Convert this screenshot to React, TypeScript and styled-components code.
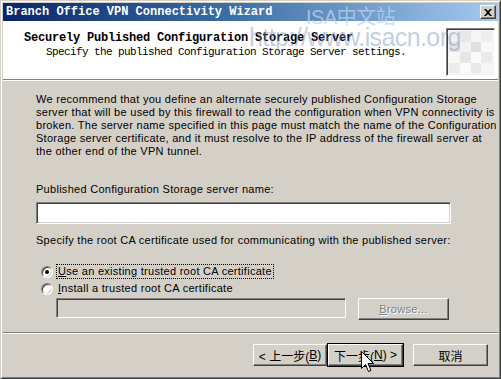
import React from "react";
import styled, { createGlobalStyle, css } from "styled-components";

const GlobalStyle = createGlobalStyle`
  html, body {
    margin: 0;
    padding: 0;
    background: #d4d0c8;
  }
  * {
    box-sizing: border-box;
  }
`;

const UI_FONT = `"Liberation Sans", Arial, sans-serif`;
const SIMSUN_LATIN = `"Liberation Mono", "Courier New", monospace`;
const CJK_FONT = `"Liberation Sans", "Noto Sans CJK SC", sans-serif`;

/* ---------- window frame ---------- */

const Window = styled.div`
  position: relative;
  width: 501px;
  height: 379px;
  background: #d4d0c8;
  border: 1px solid;
  border-color: #d4d0c8 #404040 #404040 #d4d0c8;
  box-shadow: inset 1px 1px #ffffff, inset -1px -1px #808080;
  padding: 2px;
  display: flex;
  flex-direction: column;
  overflow: hidden;
  font-family: ${UI_FONT};
  font-size: 11px;
  color: #000;
`;

const TitleBar = styled.div`
  height: 18px;
  display: flex;
  align-items: center;
  justify-content: space-between;
  padding: 0 2px 0 3px;
  background: linear-gradient(to right, #0a246a 0%, #3a6ea5 45%, #a6caf0 100%);
`;

const TitleText = styled.span`
  font-family: ${SIMSUN_LATIN};
  font-weight: bold;
  font-size: 12px;
  color: #ffffff;
  white-space: nowrap;
`;

const CloseButton = styled.div`
  width: 16px;
  height: 14px;
  background: #d4d0c8;
  border: 1px solid;
  border-color: #ffffff #404040 #404040 #ffffff;
  box-shadow: inset -1px -1px #808080;
  display: flex;
  align-items: center;
  justify-content: center;
`;

/* ---------- header ---------- */

const Header = styled.div`
  height: 59px;
  background: #ffffff;
  display: flex;
  justify-content: space-between;
  padding: 7px 3px 0 21px;
  border-bottom: 1px solid #808080;
`;

const HeaderText = styled.div`
  padding-top: 3px;
  display: flex;
  flex-direction: column;
`;

const HeaderTitle = styled.div`
  font-family: ${SIMSUN_LATIN};
  font-weight: bold;
  font-size: 12px;
  letter-spacing: -0.2px;
  line-height: 14px;
  white-space: nowrap;
`;

const HeaderSub = styled.div`
  font-family: ${SIMSUN_LATIN};
  font-size: 11px;
  letter-spacing: -0.6px;
  line-height: 13px;
  margin-top: 1px;
  padding-left: 22px;
  white-space: nowrap;
`;

const WizardImage = styled.div`
  width: 49px;
  height: 48px;
  border: 1px solid;
  border-color: #808080 #ffffff #ffffff #808080;
  box-shadow: inset 1px 1px #404040;
  background: #f4f4f4;
  display: grid;
  grid-template-columns: repeat(4, 1fr);
  grid-template-rows: repeat(4, 1fr);
  padding: 2px;
`;

const Tile = styled.div<{ $shade: string }>`
  background: ${(p) => p.$shade};
`;

/* ---------- body ---------- */

const Body = styled.div`
  flex: 1;
  border-top: 1px solid #ffffff;
  padding: 12px 0 0 33px;
  display: flex;
  flex-direction: column;
`;

const Paragraph = styled.p`
  margin: 0;
  line-height: 13px;
  letter-spacing: 0.28px;
  white-space: nowrap;
`;

const FieldLabel = styled.div<{ $gap: number }>`
  margin-top: ${(p) => p.$gap}px;
  line-height: 13px;
  letter-spacing: 0.28px;
`;

const sunken = css`
  border: 1px solid;
  border-color: #808080 #ffffff #ffffff #808080;
  box-shadow: inset 1px 1px #404040, inset -1px -1px #d4d0c8;
`;

const TextBox = styled.div<{ $disabled?: boolean }>`
  ${sunken};
  background: ${(p) => (p.$disabled ? "#d4d0c8" : "#ffffff")};
`;

const NameBox = styled(TextBox)`
  margin-top: 6px;
  width: 415px;
  height: 22px;
`;

const RadioGroup = styled.div`
  margin-top: 16px;
  display: flex;
  flex-direction: column;
`;

const RadioRow = styled.label`
  height: 17px;
  display: flex;
  align-items: center;
  padding-left: 5px;
  gap: 3px;
  letter-spacing: 0.28px;
`;

const RadioDot = styled.span<{ $checked?: boolean }>`
  position: relative;
  width: 12px;
  height: 12px;
  border-radius: 50%;
  background: #ffffff;
  border: 1px solid;
  border-color: #808080 #ffffff #ffffff #808080;
  box-shadow: inset 1px 1px #404040, inset -1px -1px #d4d0c8;
  &::after {
    content: "";
    display: ${(p) => (p.$checked ? "block" : "none")};
    position: absolute;
    left: 3px;
    top: 3px;
    width: 4px;
    height: 4px;
    border-radius: 50%;
    background: #000;
  }
`;

const RadioText = styled.span<{ $focused?: boolean }>`
  line-height: 13px;
  padding: 0 1px;
  border: 1px dotted ${(p) => (p.$focused ? "#000" : "transparent")};
`;

const Key = styled.u`
  text-decoration: underline;
  text-underline-offset: 1px;
`;

const CertRow = styled.div`
  margin-top: 1px;
  padding-left: 20px;
  display: flex;
  align-items: flex-start;
  gap: 12px;
`;

const CertBox = styled(TextBox)`
  width: 290px;
  height: 20px;
`;

const buttonBase = css`
  height: 22px;
  background: #d4d0c8;
  border: 1px solid;
  border-color: #ffffff #404040 #404040 #ffffff;
  box-shadow: inset -1px -1px #808080;
  display: flex;
  align-items: center;
  justify-content: center;
  font-size: 11px;
  padding: 0;
`;

const BrowseButton = styled.div`
  ${buttonBase};
  width: 91px;
  color: #808080;
  letter-spacing: 0.3px;
  text-shadow: 1px 1px #ffffff;
`;

/* ---------- footer ---------- */

const Footer = styled.div`
  height: 44px;
  border-top: 1px solid #808080;
  box-shadow: inset 0 1px #ffffff;
  display: flex;
  justify-content: flex-end;
  align-items: flex-start;
  padding: 11px 10px 0 0;
`;

const NavButton = styled.div<{ $default?: boolean; $width: number; $gap?: number }>`
  ${buttonBase};
  width: ${(p) => p.$width}px;
  margin-left: ${(p) => p.$gap ?? 0}px;
  font-family: ${CJK_FONT};
  font-size: 12px;
  ${(p) =>
    p.$default &&
    css`
      outline: 1px solid #000;
      outline-offset: 0;
    `}
`;

/* ---------- overlays ---------- */

const WatermarkCn = styled.div`
  position: absolute;
  left: 305px;
  top: 0px;
  font-family: "Liberation Sans", "Noto Sans CJK SC", sans-serif;
  font-size: 20px;
  letter-spacing: -0.5px;
  color: rgba(190, 210, 236, 0.75);
  pointer-events: none;
`;

const WatermarkUrl = styled.div`
  position: absolute;
  left: 248px;
  top: 22px;
  font-family: "Liberation Sans", sans-serif;
  font-size: 25px;
  letter-spacing: -0.6px;
  color: rgba(120, 145, 185, 0.45);
  pointer-events: none;
`;

const Cursor = styled.svg`
  position: absolute;
  left: 360px;
  top: 350px;
`;

const tiles = [
  "#f0f0f0", "#e8e8e8", "#f6f6f6", "#eeeeee",
  "#e4e4e4", "#f2f2f2", "#e0e0e0", "#f8f8f8",
  "#f8f8f8", "#e6e6e6", "#fafafa", "#ebebeb",
  "#ececec", "#fbfbfb", "#e9e9e9", "#f5f5f5",
];

export default function App() {
  return (
    <>
      <GlobalStyle />
      <Window>
        <TitleBar>
          <TitleText>Branch Office VPN Connectivity Wizard</TitleText>
          <CloseButton>
            <svg width="8" height="7" viewBox="0 0 8 7">
              <path d="M0 0h2l2 2 2-2h2L5 3.5 8 7H6L4 5 2 7H0l3-3.5z" fill="#000" />
            </svg>
          </CloseButton>
        </TitleBar>

        <Header>
          <HeaderText>
            <HeaderTitle>Securely Published Configuration Storage Server</HeaderTitle>
            <HeaderSub>Specify the published Configuration Storage Server settings.</HeaderSub>
          </HeaderText>
          <WizardImage>
            {tiles.map((t, i) => (
              <Tile key={i} $shade={t} />
            ))}
          </WizardImage>
        </Header>

        <Body>
          <Paragraph>
            We recommend that you define an alternate securely published Configuration Storage
            <br />
            server that will be used by this firewall to read the configuration when VPN connectivity is
            <br />
            broken. The server name specified in this page must match the name of the Configuration
            <br />
            Storage server certificate, and it must resolve to the IP address of the firewall server at
            <br />
            the other end of the VPN tunnel.
          </Paragraph>

          <FieldLabel $gap={25}>Published Configuration Storage server name:</FieldLabel>
          <NameBox />

          <FieldLabel $gap={10}>
            Specify the root CA certificate used for communicating with the published server:
          </FieldLabel>

          <RadioGroup>
            <RadioRow>
              <RadioDot $checked />
              <RadioText $focused>
                <Key>U</Key>se an existing trusted root CA certificate
              </RadioText>
            </RadioRow>
            <RadioRow>
              <RadioDot />
              <RadioText>
                <Key>I</Key>nstall a trusted root CA certificate
              </RadioText>
            </RadioRow>
          </RadioGroup>

          <CertRow>
            <CertBox $disabled />
            <BrowseButton>
              <span>
                <Key>B</Key>rowse...
              </span>
            </BrowseButton>
          </CertRow>
        </Body>

        <Footer>
          <NavButton $width={74}>&lt; 上一步(<Key>B</Key>)</NavButton>
          <NavButton $width={75} $gap={1} $default>
            下一步(<Key>N</Key>) &gt;
          </NavButton>
          <NavButton $width={75} $gap={10}>取消</NavButton>
        </Footer>

        <WatermarkCn>ISA中文站</WatermarkCn>
        <WatermarkUrl>http://www.isacn.org</WatermarkUrl>
        <Cursor width="14" height="24" viewBox="0 0 14 24">
          <path
            d="M0.5 0.5v17l4-4 3 7 2.5-1-3-7h5.5z"
            fill="#ffffff"
            stroke="#000000"
            strokeWidth="1"
          />
        </Cursor>
      </Window>
    </>
  );
}
